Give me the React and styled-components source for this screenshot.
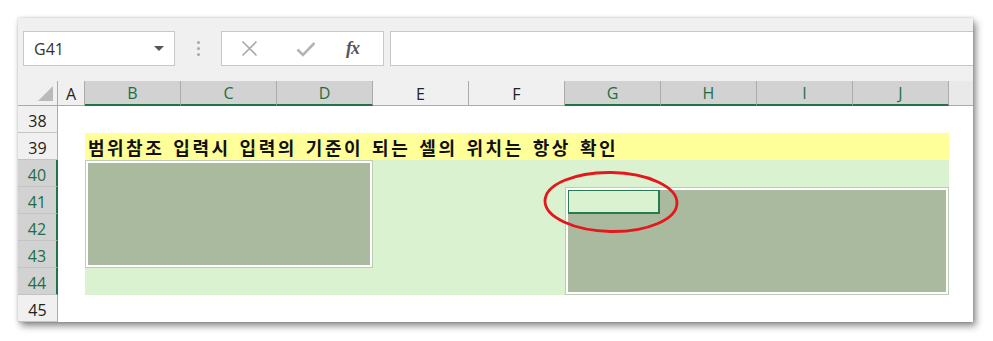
import React from "react";
import styled, { createGlobalStyle } from "styled-components";

const COLS = ["A", "B", "C", "D", "E", "F", "G", "H", "I", "J"];
const SELECTED_COLS = ["B", "C", "D", "G", "H", "I", "J"];
const ROWS = [38, 39, 40, 41, 42, 43, 44, 45];
const SELECTED_ROWS = [40, 41, 42, 43, 44];

const GlobalStyle = createGlobalStyle`
  html, body {
    margin: 0;
    padding: 0;
    background: #ffffff;
  }
  body {
    font-family: "Open Sans", "Noto Sans", sans-serif;
  }
`;

const Page = styled.div`
  width: 993px;
  height: 341px;
  padding: 18px 0 0 18px;
  box-sizing: border-box;
`;

const Window = styled.div`
  position: relative;
  width: 955px;
  height: 304px;
  background: #f0f0f0;
  overflow: hidden;
  box-shadow: 3px 4px 7px rgba(0, 0, 0, 0.45), 0 0 3px rgba(0, 0, 0, 0.18);
  display: flex;
  flex-direction: column;
`;

const FormulaBar = styled.div`
  height: 65px;
  display: flex;
  align-items: flex-start;
  padding: 13px 0 0 5px;
  box-sizing: border-box;
`;

const NameBox = styled.div`
  width: 152px;
  height: 35px;
  box-sizing: border-box;
  background: #fff;
  border: 1px solid #c8c8c8;
  display: flex;
  align-items: center;
  justify-content: space-between;
  padding: 0 10px 0 10px;
  font-size: 16px;
  color: #333;
`;

const DropArrow = styled.span`
  width: 0;
  height: 0;
  border-left: 5px solid transparent;
  border-right: 5px solid transparent;
  border-top: 5px solid #555;
`;

const Dots = styled.div`
  width: 46px;
  height: 35px;
  display: flex;
  flex-direction: column;
  align-items: center;
  justify-content: center;
  gap: 3px;

  span {
    width: 3px;
    height: 3px;
    border-radius: 50%;
    background: #a8a8a8;
  }
`;

const ButtonBox = styled.div`
  width: 163px;
  height: 35px;
  box-sizing: border-box;
  background: #fff;
  border: 1px solid #c8c8c8;
  display: flex;
  align-items: center;
  padding: 0 0 0 19px;
`;

const IconSlot = styled.div`
  width: ${(p) => p.$w}px;
  display: flex;
  align-items: center;
  justify-content: flex-start;
`;

const Fx = styled.span`
  font-family: "Liberation Serif", "DejaVu Serif", serif;
  font-style: italic;
  font-weight: bold;
  font-size: 18px;
  color: #555;
  letter-spacing: -1px;
`;

const FormulaInput = styled.div`
  flex: 1;
  height: 35px;
  margin-left: 6px;
  background: #fff;
  border: 1px solid #c8c8c8;
  border-right: none;
  box-sizing: border-box;
`;

const Sheet = styled.div`
  flex: 1;
  display: grid;
  grid-template-columns: 40px 27px repeat(9, 96px) 24px;
  grid-template-rows: 25px repeat(8, 27px);
  background: #fff;
`;

const Corner = styled.div`
  grid-row: 1;
  grid-column: 1;
  background: #f0f0f0;
  border-right: 1px solid #ababab;
  border-bottom: 1px solid #ababab;
  box-sizing: border-box;
  display: flex;
  align-items: flex-end;
  justify-content: flex-end;
  padding: 0 4px 4px 0;

  &::after {
    content: "";
    width: 0;
    height: 0;
    border-left: 15px solid transparent;
    border-bottom: 15px solid #b9b9b9;
  }
`;

const ColHead = styled.div`
  grid-row: 1;
  grid-column: ${(p) => p.$col};
  background: ${(p) => (p.$sel ? "#d2d2d2" : "#f0f0f0")};
  color: ${(p) => (p.$sel ? "#1f6e43" : "#222")};
  border-right: 1px solid #ababab;
  border-bottom: ${(p) => (p.$sel ? "2px solid #217346" : "1px solid #ababab")};
  box-sizing: border-box;
  display: flex;
  align-items: center;
  justify-content: center;
  font-size: 16px;
  padding-top: 1px;
`;

const HeadFiller = styled.div`
  grid-row: 1;
  grid-column: 12;
  background: #e9e9e9;
  border-bottom: 1px solid #ababab;
  box-sizing: border-box;
`;

const RowHead = styled.div`
  grid-column: 1;
  grid-row: ${(p) => p.$row};
  background: ${(p) => (p.$sel ? "#d2d2d2" : "#f0f0f0")};
  color: ${(p) => (p.$sel ? "#1f6e43" : "#222")};
  border-bottom: 1px solid #c4c4c4;
  border-right: ${(p) => (p.$sel ? "2px solid #217346" : "1px solid #ababab")};
  box-sizing: border-box;
  display: flex;
  align-items: center;
  justify-content: center;
  padding-top: 3px;
  font-size: 16px;
`;

const TitleBar = styled.div`
  grid-row: 3;
  grid-column: 3 / 12;
  background: #ffff99;
  display: flex;
  align-items: center;
  padding: 1px 0 0 3px;
  font-family: "Noto Sans CJK KR", "Noto Sans", sans-serif;
  font-weight: bold;
  font-size: 18px;
  letter-spacing: 2.5px;
  word-spacing: 2.5px;
  color: #111;
`;

const GreenBand = styled.div`
  grid-row: 4 / 9;
  grid-column: 3 / 12;
  background: #daf2d0;
`;

const RangeBox = styled.div`
  grid-row: ${(p) => p.$rows};
  grid-column: ${(p) => p.$cols};
  background: #a9ba9f;
  border: 1px solid #bccdb4;
  outline: 2px solid #ffffff;
  outline-offset: -3px;
  box-sizing: border-box;
  display: grid;
  grid-template-columns: 96px 1fr;
  grid-template-rows: 27px 1fr;
`;

const ActiveCell = styled.div`
  grid-row: 1;
  grid-column: 1;
  margin: 1px 2px 1px 1px;
  background: #daf2d0;
  border: 2px solid #2a7a4f;
  box-sizing: border-box;
`;

const Annotation = styled.svg`
  position: absolute;
  left: 524px;
  top: 152px;
  overflow: visible;
`;

export default function App() {
  return (
    <>
      <GlobalStyle />
      <Page>
        <Window>
          <FormulaBar>
            <NameBox>
              <span>G41</span>
              <DropArrow />
            </NameBox>
            <Dots>
              <span />
              <span />
              <span />
            </Dots>
            <ButtonBox>
              <IconSlot $w={55}>
                <svg width="17" height="17" viewBox="0 0 17 17">
                  <path d="M1.5 1.5 L15.5 15.5 M15.5 1.5 L1.5 15.5" stroke="#a9a9a9" strokeWidth="1.6" fill="none" />
                </svg>
              </IconSlot>
              <IconSlot $w={50}>
                <svg width="20" height="16" viewBox="0 0 20 16">
                  <path d="M1.5 8.5 L7 14 L18.5 2" stroke="#b4b4b4" strokeWidth="2.6" fill="none" />
                </svg>
              </IconSlot>
              <IconSlot $w={30}>
                <Fx>fx</Fx>
              </IconSlot>
            </ButtonBox>
            <FormulaInput />
          </FormulaBar>
          <Sheet>
            <Corner />
            {COLS.map((c, i) => (
              <ColHead key={c} $col={i + 2} $sel={SELECTED_COLS.includes(c)}>
                {c}
              </ColHead>
            ))}
            <HeadFiller />
            {ROWS.map((r, i) => (
              <RowHead key={r} $row={i + 2} $sel={SELECTED_ROWS.includes(r)}>
                {r}
              </RowHead>
            ))}
            <TitleBar>범위참조 입력시 입력의 기준이 되는 셀의 위치는 항상 확인</TitleBar>
            <GreenBand />
            <RangeBox $rows="4 / 8" $cols="3 / 6" />
            <RangeBox $rows="5 / 9" $cols="8 / 12">
              <ActiveCell />
            </RangeBox>
          </Sheet>
          <Annotation width="140" height="66" viewBox="0 0 140 66">
            <ellipse cx="69" cy="32" rx="66" ry="29.5" stroke="#e5161c" strokeWidth="2.8" fill="none" transform="rotate(1 69 32)" />
          </Annotation>
        </Window>
      </Page>
    </>
  );
}
